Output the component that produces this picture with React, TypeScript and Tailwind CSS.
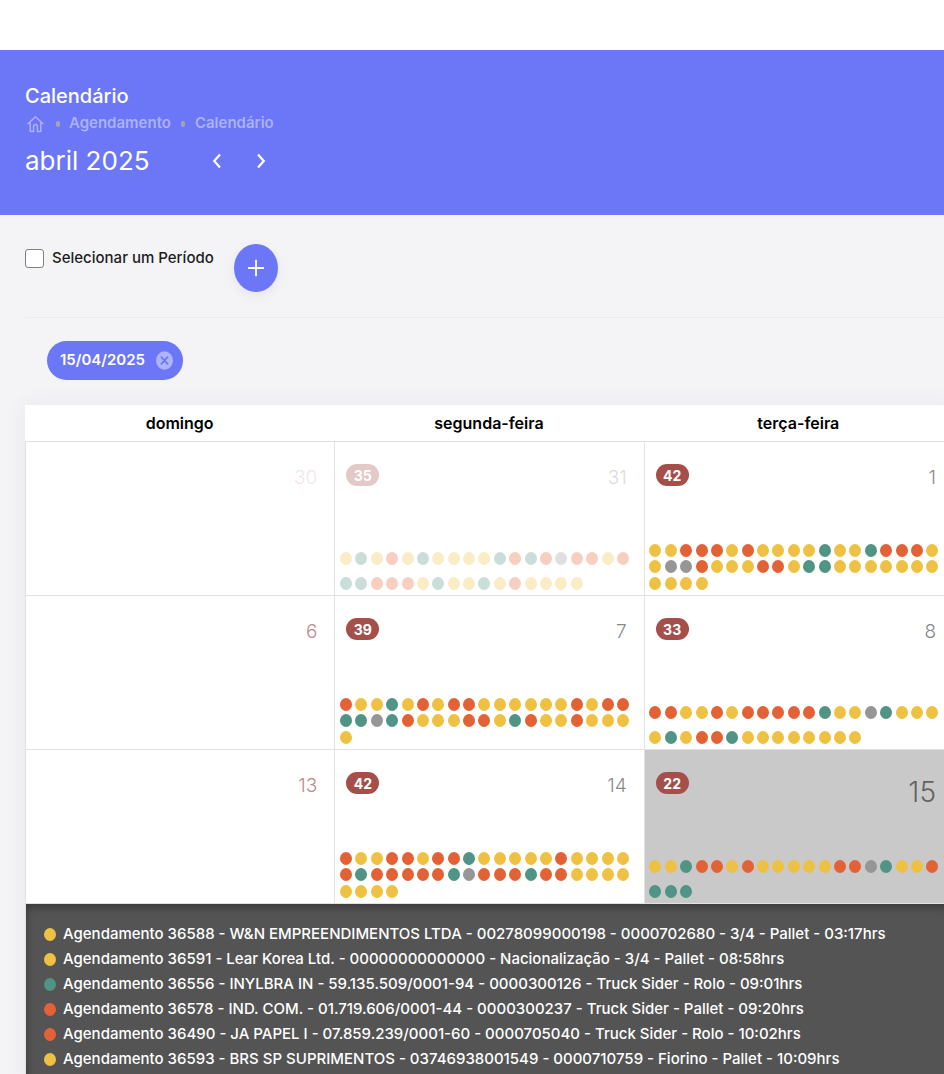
import React from "react";

type DotKind = "y" | "g" | "r" | "n";

interface Day {
  day: number;
  count?: number;
  dots?: string;
  outside?: boolean;
  sunday?: boolean;
  selected?: boolean;
}

const DOT_COLORS: Record<DotKind, string> = {
  y: "bg-[#efc143]",
  g: "bg-[#4f9485]",
  r: "bg-[#e26236]",
  n: "bg-[#969696]",
};

const WEEKDAYS = ["domingo", "segunda-feira", "terça-feira"];

const WEEKS: Day[][] = [
  [
    { day: 30, sunday: true, outside: true },
    { day: 31, count: 35, outside: true, dots: "ygyrygyyyygrgrnrryr" + "ggrrrygyygyryyyy" },
    { day: 1, count: 42, dots: "yyrrryryyyygyygrrry" + "ynnryyyrryggyyyyyyy" + "yyyy" },
  ],
  [
    { day: 6, sunday: true },
    { day: 7, count: 39, dots: "ryygyryrryyyyyyryrr" + "ggngryyyrrygryyryyy" + "y" },
    { day: 8, count: 33, dots: "rryyryrrrrrgyyngyyy" + "ygyrrgyyyyyyyy" },
  ],
  [
    { day: 13, sunday: true },
    { day: 14, count: 42, dots: "ryyrryrrgyyyyyryyyy" + "rgrrrrrgnrrrgrryyyy" + "yyyy" },
    { day: 15, count: 22, selected: true, dots: "yygrryryyyyyrrngyyr" + "ggg" },
  ],
];

const APPOINTMENTS: { kind: DotKind; text: string }[] = [
  { kind: "y", text: "Agendamento 36588 - W&N EMPREENDIMENTOS LTDA - 00278099000198 - 0000702680 - 3/4 - Pallet - 03:17hrs" },
  { kind: "y", text: "Agendamento 36591 - Lear Korea Ltd. - 00000000000000 - Nacionalização - 3/4 - Pallet - 08:58hrs" },
  { kind: "g", text: "Agendamento 36556 - INYLBRA IN - 59.135.509/0001-94 - 0000300126 - Truck Sider - Rolo - 09:01hrs" },
  { kind: "r", text: "Agendamento 36578 - IND. COM. - 01.719.606/0001-44 - 0000300237 - Truck Sider - Pallet - 09:20hrs" },
  { kind: "r", text: "Agendamento 36490 - JA PAPEL I - 07.859.239/0001-60 - 0000705040 - Truck Sider - Rolo - 10:02hrs" },
  { kind: "y", text: "Agendamento 36593 - BRS SP SUPRIMENTOS - 03746938001549 - 0000710759 - Fiorino - Pallet - 10:09hrs" },
];

function dayColor(d: Day) {
  if (d.selected) return "text-[28px] leading-[40px] text-[#636363]";
  if (d.sunday) return "text-[19px] leading-[28px] text-[#bd8a8a]";
  return "text-[19px] leading-[28px] text-[#8a8a8a]";
}

function DayCell({ d }: { d: Day }) {
  return (
    <td
      className={`h-[154px] border-b border-l border-[#e1e1e1] p-0 align-top ${d.selected ? "bg-[#c9c9c9]" : "bg-white"}`}
    >
      <div className={`flex h-full flex-col justify-between pt-[22px] pb-[5px] ${d.outside ? (d.sunday ? "opacity-20" : "opacity-30") : ""}`}>
        <div className="flex items-start justify-between pr-[17px] pl-[11px]">
          {d.count ? (
            <span className="flex h-[22px] w-[33px] items-center justify-center rounded-full bg-[#a54f4b] text-[14px] font-bold text-white">
              {d.count}
            </span>
          ) : (
            <span />
          )}
          <span className={`font-light ${dayColor(d)}`}>{d.day}</span>
        </div>
        {d.dots && (
          <div className="mr-[13px] ml-[3px] grid h-[50px] grid-cols-[repeat(19,minmax(0,1fr))] items-end justify-items-center">
            {d.dots.split("").map((k, i) => (
              <span key={i} className={`h-[13px] w-[12px] rounded-[50%] ${DOT_COLORS[k as DotKind]}`} />
            ))}
          </div>
        )}
      </div>
    </td>
  );
}

function Header() {
  return (
    <header className="bg-[#6b77f6] px-[25px] pt-8 pb-9 text-white">
      <h1 className="text-[20px] leading-[28px] font-medium">Calendário</h1>
      <nav aria-label="Navegação" className="flex h-[25px] items-center pt-[2px] text-[15px] font-semibold text-[#abb2fa]">
        <a href="#inicio" aria-label="Início" className="ml-[2px]">
          <svg width="17" height="18" viewBox="0 0 17 18" fill="none" stroke="currentColor" strokeWidth="1.5" strokeLinejoin="round" strokeLinecap="round">
            <path d="M1 8.8 8.5 1.8 16 8.8M3.2 7.6V16.4H6.6V11.4Q6.6 9.6 8.5 9.6T10.4 11.4V16.4H13.8V7.6" />
          </svg>
        </a>
        <span className="mr-[9px] ml-3 h-[6px] w-1 rounded-full bg-[#a3a3b4]" />
        <a href="#agendamento">Agendamento</a>
        <span className="mx-[10px] h-[6px] w-1 rounded-full bg-[#a3a3b4]" />
        <a href="#calendario">Calendário</a>
      </nav>
      <div className="flex h-11 items-center pt-2">
        <h2 className="w-[180px] text-[26px] leading-[36px] font-normal">abril 2025</h2>
        <button type="button" aria-label="Mês anterior" className="flex h-8 w-6 items-center justify-center">
          <svg width="10" height="16" viewBox="0 0 10 16" fill="none" stroke="currentColor" strokeWidth="2.2">
            <path d="M8 1.5 2.2 8 8 14.5" />
          </svg>
        </button>
        <button type="button" aria-label="Próximo mês" className="ml-5 flex h-8 w-6 items-center justify-center">
          <svg width="10" height="16" viewBox="0 0 10 16" fill="none" stroke="currentColor" strokeWidth="2.2">
            <path d="M2 1.5 7.8 8 2 14.5" />
          </svg>
        </button>
      </div>
    </header>
  );
}

export default function App() {
  return (
    <div className="min-h-screen overflow-hidden bg-[#f4f4f7] font-['Inter',sans-serif] text-[#1d1d1d]">
      <div className="h-[50px] bg-white" />
      <Header />
      <main className="pl-[25px]">
        <div className="flex h-[103px] items-start border-b border-[#ebebed] pt-[29px]">
          <label className="flex h-7 items-center gap-2 text-[15px] font-medium">
            <input
              type="checkbox"
              className="h-[19px] w-[19px] appearance-none rounded-[3px] border border-[#808080] bg-white checked:bg-[#6b77f6]"
            />
            Selecionar um Período
          </label>
          <button
            type="button"
            aria-label="Adicionar"
            className="ml-5 flex h-12 w-11 items-center justify-center rounded-[50%] bg-[#6b77f6] text-white shadow-[0_4px_12px_rgba(60,60,90,0.08)]"
          >
            <svg width="18" height="18" viewBox="0 0 18 18" fill="none" stroke="currentColor" strokeWidth="1.8">
              <path d="M9 .8V17.2M1 9H17" />
            </svg>
          </button>
        </div>

        <div className="flex px-[22px] pt-[23px] pb-[25px]">
          <div className="flex h-[39px] items-center gap-[11px] rounded-full bg-[#6b77f6] pr-[10px] pl-[13px] text-[15px] font-semibold text-white">
            15/04/2025
            <button type="button" aria-label="Remover data">
              <svg className="block" width="17" height="19" viewBox="0 0 17 19">
                <ellipse cx="8.5" cy="9.5" rx="8.5" ry="9.2" fill="#aeb4fa" />
                <path d="M5 5.6 12 13.4M12 5.6 5 13.4" stroke="#6b77f6" strokeWidth="1.7" />
              </svg>
            </button>
          </div>
        </div>

        <div className="-mr-[9px] bg-white shadow-[0_0_20px_rgba(76,87,125,0.08)]">
          <table className="w-full table-fixed border-separate border-spacing-0">
            <thead>
              <tr>
                {WEEKDAYS.map((name) => (
                  <th key={name} scope="col" className="h-[37px] border-b border-[#e1e1e1] p-0 text-[16px] leading-[22px] font-semibold text-black">
                    {name}
                  </th>
                ))}
              </tr>
            </thead>
            <tbody>
              {WEEKS.map((week, i) => (
                <tr key={i}>
                  {week.map((d) => (
                    <DayCell key={d.day} d={d} />
                  ))}
                </tr>
              ))}
              <tr>
                <td colSpan={3} className="border-l border-[#e1e1e1] p-0">
                  <ul className="bg-[#545454] pt-[18px] pr-4 pb-3 pl-[18px] text-[15px] font-medium text-white shadow-[inset_0_3px_8px_rgba(0,0,0,0.35)]">
                    {APPOINTMENTS.map((a) => (
                      <li key={a.text} className="flex h-[25px] items-center gap-[7px] whitespace-nowrap">
                        <span className={`h-[13px] w-3 shrink-0 rounded-[50%] ${DOT_COLORS[a.kind]}`} />
                        {a.text}
                      </li>
                    ))}
                  </ul>
                </td>
              </tr>
            </tbody>
          </table>
        </div>
      </main>
    </div>
  );
}
